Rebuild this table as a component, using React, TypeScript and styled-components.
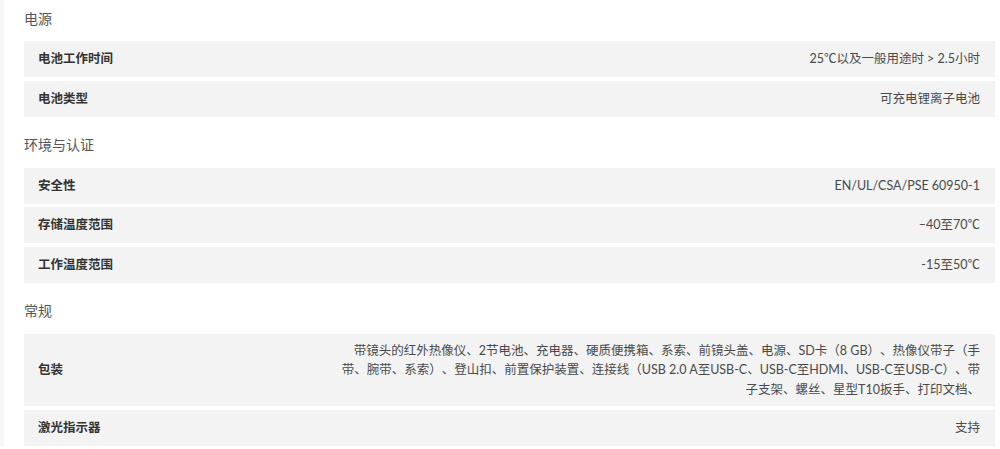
import styled, { createGlobalStyle } from "styled-components";

type Spec = { label: string; value: string };
type Section = { title: string; rows: Spec[] };

const sections: Section[] = [
  {
    title: "电源",
    rows: [
      { label: "电池工作时间", value: "25℃以及一般用途时 > 2.5小时" },
      { label: "电池类型", value: "可充电锂离子电池" },
    ],
  },
  {
    title: "环境与认证",
    rows: [
      { label: "安全性", value: "EN/UL/CSA/PSE 60950-1" },
      { label: "存储温度范围", value: "–40至70℃" },
      { label: "工作温度范围", value: "-15至50℃" },
    ],
  },
  {
    title: "常规",
    rows: [
      {
        label: "包装",
        value:
          "带镜头的红外热像仪、2节电池、充电器、硬质便携箱、系索、前镜头盖、电源、SD卡（8 GB）、热像仪带子（手带、腕带、系索）、登山扣、前置保护装置、连接线（USB 2.0 A至USB-C、USB-C至HDMI、USB-C至USB-C）、带子支架、螺丝、星型T10扳手、打印文档、",
      },
      { label: "激光指示器", value: "支持" },
    ],
  },
];

const GlobalStyle = createGlobalStyle`
  body {
    margin: 0;
    background: #ffffff;
    font-family: "Lato", "Noto Sans CJK SC", sans-serif;
    color: #333333;
    text-spacing-trim: space-all;
  }
`;

const Page = styled.div`
  width: 1000px;
  box-sizing: border-box;
  padding: 7.5px 5px 0 20px;
  border-left: 4px solid #f7f7f7;
`;

const Group = styled.section`
  & + & {
    margin-top: 17.5px;
  }
`;

const Title = styled.h3`
  margin: 0 0 11.5px;
  font-size: 14px;
  font-weight: 400;
  line-height: 22px;
  color: #555555;
`;

const List = styled.div`
  display: flex;
  flex-direction: column;
  gap: 3.6px;
`;

const Row = styled.div`
  display: flex;
  align-items: center;
  justify-content: space-between;
  min-height: 36px;
  padding: 7px 15px 7px 14px;
  box-sizing: border-box;
  background: #f3f3f3;
`;

const Label = styled.div`
  font-size: 12.5px;
  font-weight: 700;
  line-height: 19.5px;
  color: #333333;
  white-space: nowrap;
`;

const Value = styled.div`
  max-width: 650px;
  font-size: 12.5px;
  line-height: 19.5px;
  color: #4a4a4a;
  text-align: right;
`;

export default function App() {
  return (
    <>
      <GlobalStyle />
      <Page>
        {sections.map((s) => (
          <Group key={s.title}>
            <Title>{s.title}</Title>
            <List>
              {s.rows.map((r) => (
                <Row key={r.label}>
                  <Label>{r.label}</Label>
                  <Value>{r.value}</Value>
                </Row>
              ))}
            </List>
          </Group>
        ))}
      </Page>
    </>
  );
}
